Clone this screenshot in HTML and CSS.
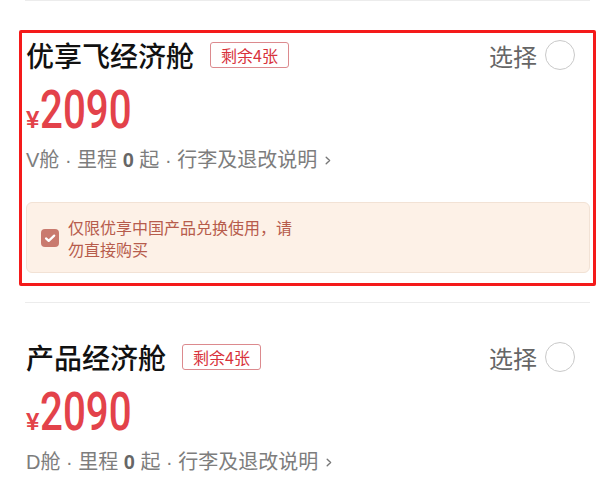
FILE: index.html
```html
<!DOCTYPE html>
<html lang="zh-CN">
<head>
  <meta charset="UTF-8">
  <meta name="viewport" content="width=device-width, initial-scale=1.0">
  <title>选择舱位</title>
  <link rel="stylesheet" href="styles.css">
</head>
<body>
  <div class="list">
    <div class="divider"></div>

    <div class="cabin cabin-selected">
      <div class="cabin-head">
        <div class="cabin-title">
          <h2>优享飞经济舱</h2>
          <span class="stock">剩余4张</span>
        </div>
        <div class="choose">选择<span class="radio"></span></div>
      </div>
      <div class="price"><span class="currency">¥</span><span class="amount">2090</span></div>
      <div class="rules">
        V舱 · 里程 <b>0</b> 起 · 行李及退改说明
        <svg class="chevron" width="6" height="9" viewBox="0 0 6 9"><path d="M1.2 1.2L4.6 4.5L1.2 7.8" fill="none" stroke="#777" stroke-width="1.4" stroke-linecap="round" stroke-linejoin="round"/></svg>
      </div>
      <div class="notice">
        <svg class="check" width="18" height="18" viewBox="0 0 18 18">
          <rect width="18" height="18" rx="4" fill="#c97a6e"/>
          <path d="M5 9.4l2.7 2.5L13.2 6.6" fill="none" stroke="#fff" stroke-width="2.2" stroke-linecap="round" stroke-linejoin="round"/>
        </svg>
        <p>仅限优享中国产品兑换使用，请勿直接购买</p>
      </div>
    </div>

    <div class="divider"></div>

    <div class="cabin">
      <div class="cabin-head">
        <div class="cabin-title">
          <h2>产品经济舱</h2>
          <span class="stock">剩余4张</span>
        </div>
        <div class="choose">选择<span class="radio"></span></div>
      </div>
      <div class="price"><span class="currency">¥</span><span class="amount">2090</span></div>
      <div class="rules">
        D舱 · 里程 <b>0</b> 起 · 行李及退改说明
        <svg class="chevron" width="6" height="9" viewBox="0 0 6 9"><path d="M1.2 1.2L4.6 4.5L1.2 7.8" fill="none" stroke="#777" stroke-width="1.4" stroke-linecap="round" stroke-linejoin="round"/></svg>
      </div>
    </div>
  </div>
</body>
</html>
```

FILE: styles.css
```css
html {
  overflow: hidden;
}
body {
  margin: 0;
  background: #fff;
  font-family: "Noto Sans CJK SC", "Noto Sans", sans-serif;
  color: #111;
}
.list {
  margin: 0 22px 0 26px;
}
.divider {
  height: 1px;
  margin-left: -1px;
  background: #ececec;
}
.cabin {
  position: relative;
  padding: 38px 0 29px;
}
.cabin-selected::after {
  content: "";
  position: absolute;
  top: 29px;
  bottom: 16px;
  left: -7px;
  right: -6px;
  border: 3px solid #f41a1a;
  border-radius: 2px;
  pointer-events: none;
}
.cabin-head {
  display: flex;
  justify-content: space-between;
  align-items: center;
  height: 32px;
  padding-right: 15px;
}
.cabin-title {
  display: flex;
  align-items: center;
}
.cabin-title h2 {
  margin: 0;
  font-size: 28px;
  font-weight: 500;
  line-height: 32px;
  color: #111;
}
.stock {
  margin-left: 16px;
  padding: 0 10px;
  height: 24px;
  line-height: 24px;
  border: 1px solid #dc8a8e;
  border-radius: 3px;
  font-size: 16px;
  color: #d8323b;
}
.choose {
  display: flex;
  align-items: center;
  gap: 8px;
  font-size: 24px;
  color: #666;
}
.radio {
  width: 28px;
  height: 28px;
  border: 1.5px solid #c9c9c9;
  border-radius: 50%;
}
.price {
  margin-top: 11px;
  height: 56px;
  line-height: 56px;
  color: #e3424a;
}
.currency {
  font-family: "Liberation Sans", sans-serif;
  font-size: 24px;
  font-weight: 700;
  line-height: 1;
  margin-right: 1px;
}
.amount {
  display: inline-block;
  font-family: Roboto, sans-serif;
  font-size: 53px;
  font-weight: 500;
  transform: scaleX(0.76);
  transform-origin: left center;
}
.rules {
  margin-top: 10px;
  font-family: "Liberation Sans", "Noto Sans CJK SC", sans-serif;
  font-size: 20px;
  line-height: 24px;
  color: #7d7d7d;
}
.rules b {
  font-weight: 700;
  color: #666;
}
.chevron {
  margin-left: 2px;
  vertical-align: 2px;
}
.notice {
  display: flex;
  align-items: center;
  margin-top: 30px;
  height: 69px;
  padding: 0 14px;
  background: #fdf1e7;
  border: 1px solid #f2e2d5;
  border-radius: 6px;
}
.check {
  flex-shrink: 0;
}
.notice p {
  margin: 0 0 0 9px;
  width: 228px;
  font-size: 16px;
  line-height: 22px;
  color: #b75c4c;
}
```
